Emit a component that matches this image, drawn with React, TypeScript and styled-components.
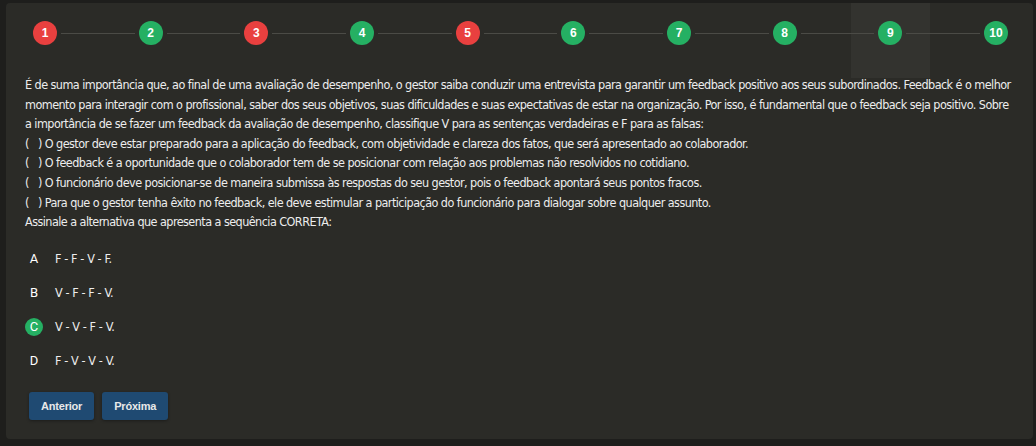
import styled, { createGlobalStyle } from "styled-components";

const GlobalStyle = createGlobalStyle`
    html, body {
        margin: 0;
        padding: 0;
        background: #1e1e1c;
    }
    body {
        font-family: "DejaVu Sans Condensed", "DejaVu Sans", sans-serif;
        color: #ececec;
    }
`;

type StepStatus = "wrong" | "right";

const steps: { n: number; status: StepStatus }[] = [
    { n: 1, status: "wrong" },
    { n: 2, status: "right" },
    { n: 3, status: "wrong" },
    { n: 4, status: "right" },
    { n: 5, status: "wrong" },
    { n: 6, status: "right" },
    { n: 7, status: "right" },
    { n: 8, status: "right" },
    { n: 9, status: "right" },
    { n: 10, status: "right" },
];

const options = [
    { letter: "A", text: "F - F - V - F." },
    { letter: "B", text: "V - F - F - V." },
    { letter: "C", text: "V - V - F - V." },
    { letter: "D", text: "F - V - V - V." },
];

export default function App() {
    const current = 9;
    const selected = "C";

    return (
        <>
            <GlobalStyle />
            <Page>
                <Card>
                    <Stepper>
                        {steps.map((step, i) => (
                            <StepGroup key={step.n} $last={i === steps.length - 1}>
                                <Step $active={step.n === current}>
                                    <StepCircle $status={step.status}>{step.n}</StepCircle>
                                </Step>
                                {i < steps.length - 1 && <Connector />}
                            </StepGroup>
                        ))}
                    </Stepper>

                    <Question>
                        <p>
                            É de suma importância que, ao final de uma avaliação de desempenho, o gestor saiba
                            conduzir uma entrevista para garantir um feedback positivo aos seus subordinados.
                            Feedback é o melhor momento para interagir com o profissional, saber dos seus
                            objetivos, suas dificuldades e suas expectativas de estar na organização. Por isso, é
                            fundamental que o feedback seja positivo. Sobre a importância de se fazer um feedback
                            da avaliação de desempenho, classifique V para as sentenças verdadeiras e F para as
                            falsas:
                        </p>
                        <p>( &nbsp; ) O gestor deve estar preparado para a aplicação do feedback, com objetividade e clareza dos fatos, que será apresentado ao colaborador.</p>
                        <p>( &nbsp; ) O feedback é a oportunidade que o colaborador tem de se posicionar com relação aos problemas não resolvidos no cotidiano.</p>
                        <p>( &nbsp; ) O funcionário deve posicionar-se de maneira submissa às respostas do seu gestor, pois o feedback apontará seus pontos fracos.</p>
                        <p>( &nbsp; ) Para que o gestor tenha êxito no feedback, ele deve estimular a participação do funcionário para dialogar sobre qualquer assunto.</p>
                        <p>Assinale a alternativa que apresenta a sequência CORRETA:</p>
                    </Question>

                    <OptionList>
                        {options.map((opt) => (
                            <Option key={opt.letter}>
                                <Letter $selected={opt.letter === selected}>{opt.letter}</Letter>
                                <OptionText>{opt.text}</OptionText>
                            </Option>
                        ))}
                    </OptionList>

                    <Actions>
                        <NavButton>Anterior</NavButton>
                        <NavButton>Próxima</NavButton>
                    </Actions>
                </Card>
            </Page>
        </>
    );
}

const Page = styled.div`
    width: 1036px;
    height: 446px;
    padding: 3px 3px 0 6px;
    box-sizing: border-box;
`;

const Card = styled.div`
    width: 1027px;
    height: 436px;
    box-sizing: border-box;
    background: #2b2b27;
    border-radius: 4px;
    padding: 18px 20px 0 19px;
`;

const Stepper = styled.div`
    display: flex;
    align-items: center;
    margin: 0 5px 0 8px;
    position: relative;
    z-index: 0;
`;

const StepGroup = styled.div<{ $last: boolean }>`
    display: flex;
    align-items: center;
    flex: ${(p) => (p.$last ? "0 0 auto" : "1 1 0")};
`;

const Step = styled.div<{ $active: boolean }>`
    position: relative;
    width: 24px;
    height: 24px;

    &::before {
        content: "";
        display: ${(p) => (p.$active ? "block" : "none")};
        position: absolute;
        left: -27px;
        right: -28px;
        top: -18px;
        bottom: -33px;
        background: #33332f;
        z-index: -1;
    }
`;

const StepCircle = styled.div<{ $status: StepStatus }>`
    width: 24px;
    height: 24px;
    border-radius: 50%;
    background: ${(p) => (p.$status === "wrong" ? "#e9403f" : "#25b063")};
    color: #ffffff;
    font-family: "Liberation Sans", sans-serif;
    font-weight: 700;
    font-size: 12px;
    display: flex;
    align-items: center;
    justify-content: center;
`;

const Connector = styled.div`
    flex: 1;
    height: 1px;
    margin: 0 4px;
    background: #4b4b46;
`;

const Question = styled.div`
    margin-top: 30px;
    font-size: 12.5px;
    letter-spacing: -0.55px;
    line-height: 19.6px;
    color: #ededed;

    p {
        margin: 0;
    }
`;

const OptionList = styled.div`
    margin-top: 17px;
    display: flex;
    flex-direction: column;
    gap: 14px;
`;

const Option = styled.div`
    display: flex;
    align-items: center;
    height: 20px;
    gap: 12px;
`;

const Letter = styled.span<{ $selected: boolean }>`
    width: 18px;
    height: 18px;
    border-radius: 50%;
    background: ${(p) => (p.$selected ? "#25b063" : "transparent")};
    color: #ffffff;
    font-family: "Roboto", sans-serif;
    font-size: 13px;
    display: flex;
    align-items: center;
    justify-content: center;
`;

const OptionText = styled.span`
    font-size: 12.5px;
    letter-spacing: -0.4px;
    color: #ededed;
`;

const Actions = styled.div`
    margin-top: 21px;
    display: flex;
    gap: 8px;
    padding-left: 4px;
`;

const NavButton = styled.button`
    height: 28px;
    padding: 0 12px;
    border: none;
    border-radius: 3px;
    background: #1f4a72;
    color: #e8e8e8;
    font-family: "Liberation Sans", sans-serif;
    font-weight: 700;
    font-size: 11px;
    letter-spacing: -0.2px;
    box-shadow: 0 1px 3px rgba(0, 0, 0, 0.35);
    cursor: pointer;
`;
